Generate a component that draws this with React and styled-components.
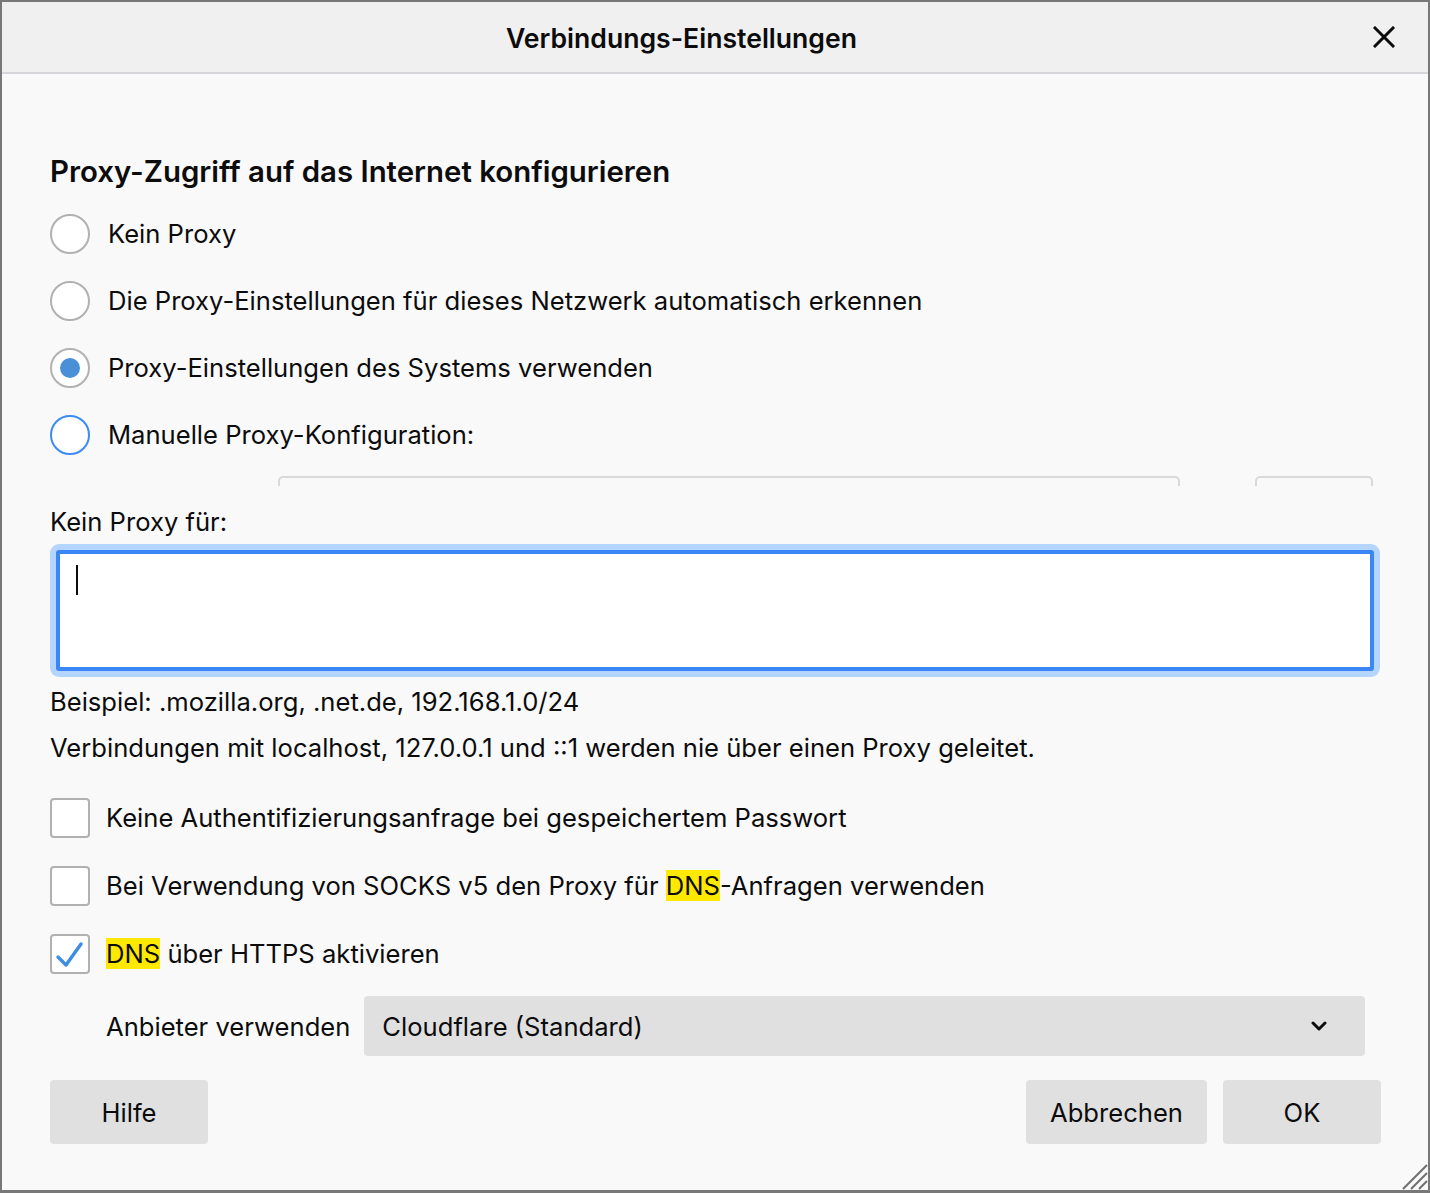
import React from 'react'
import styled, { createGlobalStyle } from 'styled-components'

const GlobalStyle = createGlobalStyle`
  html, body {
    margin: 0;
    padding: 0;
    background: #7a7a7a;
  }
  * {
    box-sizing: border-box;
  }
  body {
    font-family: Inter, "Noto Sans", "Liberation Sans", sans-serif;
    color: #0c0c0d;
  }
`

const App = () => {
  return (
    <>
      <GlobalStyle />
      <Window>
        <Header>
          <Title>Verbindungs-Einstellungen</Title>
          <CloseButton aria-label="Schließen">
            <svg width="22" height="22" viewBox="0 0 22 22">
              <path d="M2 2 L20 20 M20 2 L2 20" stroke="#0c0c0d" strokeWidth="3" strokeLinecap="square" />
            </svg>
          </CloseButton>
        </Header>

        <Body>
          <Heading>Proxy-Zugriff auf das Internet konfigurieren</Heading>

          <RadioGroup>
            <OptionRow>
              <Radio />
              <span>Kein Proxy</span>
            </OptionRow>
            <OptionRow>
              <Radio />
              <span>Die Proxy-Einstellungen für dieses Netzwerk automatisch erkennen</span>
            </OptionRow>
            <OptionRow>
              <Radio $checked />
              <span>Proxy-Einstellungen des Systems verwenden</span>
            </OptionRow>
            <OptionRow>
              <Radio $focused />
              <span>Manuelle Proxy-Konfiguration:</span>
            </OptionRow>
          </RadioGroup>

          <ManualStrip>
            <GhostInput $width={902} />
            <GhostInput $width={118} />
          </ManualStrip>

          <FieldLabel>Kein Proxy für:</FieldLabel>
          <FocusRing>
            <TextArea>
              <Caret />
            </TextArea>
          </FocusRing>

          <Hints>
            <div>Beispiel: .mozilla.org, .net.de, 192.168.1.0/24</div>
            <div>Verbindungen mit localhost, 127.0.0.1 und ::1 werden nie über einen Proxy geleitet.</div>
          </Hints>

          <CheckGroup>
            <OptionRow $tight>
              <CheckBox />
              <span>Keine Authentifizierungsanfrage bei gespeichertem Passwort</span>
            </OptionRow>
            <OptionRow $tight>
              <CheckBox />
              <span>
                Bei Verwendung von SOCKS v5 den Proxy für <Mark>DNS</Mark>-Anfragen verwenden
              </span>
            </OptionRow>
            <OptionRow $tight>
              <CheckBox>
                <svg width="36" height="36" viewBox="0 0 36 36">
                  <path d="M6 21 L14 29 L29 8" fill="none" stroke="#3d8ee3" strokeWidth="3.4" strokeLinecap="round" strokeLinejoin="round" />
                </svg>
              </CheckBox>
              <span>
                <Mark>DNS</Mark> über HTTPS aktivieren
              </span>
            </OptionRow>
          </CheckGroup>

          <ProviderRow>
            <span>Anbieter verwenden</span>
            <Select>
              <span>Cloudflare (Standard)</span>
              <svg width="16" height="12" viewBox="0 0 16 12">
                <path d="M2 3 L8 9 L14 3" fill="none" stroke="#0c0c0d" strokeWidth="3" strokeLinecap="round" strokeLinejoin="round" />
              </svg>
            </Select>
          </ProviderRow>

          <Footer>
            <Button $width={158}>Hilfe</Button>
            <FooterRight>
              <Button $width={181}>Abbrechen</Button>
              <Button $width={158}>OK</Button>
            </FooterRight>
          </Footer>
        </Body>

        <Grip>
          <svg width="28" height="28" viewBox="0 0 28 28">
            <path d="M27 3 L3 27 M27 11 L11 27 M27 19 L19 27" stroke="#6f6f6f" strokeWidth="2" />
          </svg>
        </Grip>
      </Window>
    </>
  )
}

export default App

const Window = styled.div`
  position: relative;
  height: 100vh;
  min-height: 1193px;
  border: 2px solid #787878;
  border-bottom-width: 3px;
  background: #f9f9fa;
  display: flex;
  flex-direction: column;
  overflow: hidden;
`

const Header = styled.div`
  height: 72px;
  flex-shrink: 0;
  background: #f0f0f0;
  border-bottom: 2px solid #d7d7db;
  display: flex;
  align-items: center;
`

const Title = styled.h1`
  flex: 1;
  margin: 0;
  text-align: center;
  font-size: 26.6px;
  font-weight: 600;
  padding-top: 2px;
`

const CloseButton = styled.button`
  margin: 0 29px 0 8px;
  width: 30px;
  height: 30px;
  border: none;
  background: none;
  padding: 0;
  display: flex;
  align-items: center;
  justify-content: center;
`

const Body = styled.div`
  flex: 1;
  padding: 0 48px;
  display: flex;
  flex-direction: column;
  font-size: 25.6px;
`

const Heading = styled.h2`
  margin: 78px 0 0;
  font-size: 29.4px;
  font-weight: 600;
  line-height: 40px;
`

const RadioGroup = styled.div`
  margin-top: 8px;
  display: flex;
  flex-direction: column;
`

const CheckGroup = styled.div`
  margin-top: 13px;
  display: flex;
  flex-direction: column;
`

const OptionRow = styled.label`
  height: ${p => (p.$tight ? 68 : 67)}px;
  display: flex;
  align-items: center;
  gap: ${p => (p.$tight ? 16 : 18)}px;
  line-height: 30px;
`

const Radio = styled.span`
  width: 40px;
  height: 40px;
  flex-shrink: 0;
  border-radius: 50%;
  background: #fff;
  border: 2px solid ${p => (p.$focused ? '#3b8af6' : '#b1b1b1')};
  display: flex;
  align-items: center;
  justify-content: center;

  &::after {
    content: '';
    width: 20px;
    height: 20px;
    border-radius: 50%;
    background: #4a90d9;
    display: ${p => (p.$checked ? 'block' : 'none')};
  }
`

const ManualStrip = styled.div`
  margin-top: 8px;
  padding-left: 228px;
  height: 10px;
  overflow: hidden;
  display: flex;
  gap: 75px;
`

const GhostInput = styled.div`
  width: ${p => p.$width}px;
  height: 40px;
  flex-shrink: 0;
  border: 2px solid #d9d9d9;
  border-radius: 5px;
  background: #f9f9fa;
`

const FieldLabel = styled.div`
  margin-top: 21px;
  line-height: 30px;
`

const FocusRing = styled.div`
  margin-top: 7px;
  padding: 6px;
  background: #b4d5fd;
  border-radius: 9px;
`

const TextArea = styled.div`
  height: 121px;
  background: #fff;
  border: 4px solid #3b86f7;
  border-radius: 3px;
  padding: 11px 16px;
`

const Caret = styled.div`
  width: 2px;
  height: 30px;
  background: #0c0c0d;
`

const Hints = styled.div`
  margin-top: 2px;
  line-height: 46px;
`

const CheckBox = styled.span`
  width: 40px;
  height: 40px;
  flex-shrink: 0;
  border: 2px solid #b1b1b1;
  border-radius: 4px;
  background: #fff;
  display: flex;
  align-items: center;
  justify-content: center;
`

const Mark = styled.mark`
  background: #ffe900;
  color: inherit;
`

const ProviderRow = styled.div`
  margin-top: 8px;
  padding-left: 56px;
  display: flex;
  align-items: center;
  gap: 14px;
`

const Select = styled.div`
  flex: 1;
  margin-right: 15px;
  height: 60px;
  background: #e0e0e1;
  border-radius: 4px;
  padding: 0 38px 0 18px;
  display: flex;
  align-items: center;
  justify-content: space-between;
`

const Footer = styled.div`
  margin-top: 24px;
  display: flex;
  justify-content: space-between;
  margin-right: -1px;
`

const FooterRight = styled.div`
  display: flex;
  gap: 16px;
`

const Button = styled.button`
  width: ${p => p.$width}px;
  height: 64px;
  border: none;
  border-radius: 4px;
  background: #e0e0e1;
  font-family: inherit;
  font-size: 25.6px;
  color: #0c0c0d;
`

const Grip = styled.div`
  position: absolute;
  right: 0;
  bottom: 0;
  width: 28px;
  height: 28px;
`
